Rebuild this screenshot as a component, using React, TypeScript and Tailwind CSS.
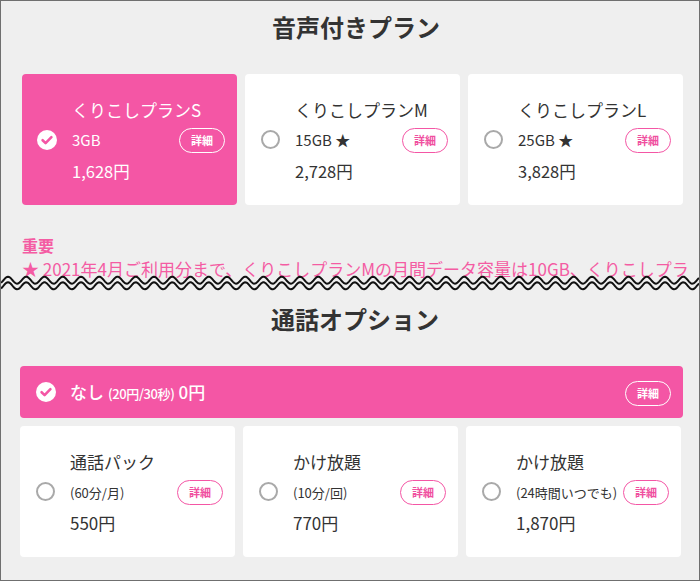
import React from 'react';

const PINK = '#f456a5';

type Plan = {
  name: string;
  spec: string;
  price: string;
  selected?: boolean;
};

const voicePlans: Plan[] = [
  { name: 'くりこしプランS', spec: '3GB', price: '1,628円', selected: true },
  { name: 'くりこしプランM', spec: '15GB ★', price: '2,728円' },
  { name: 'くりこしプランL', spec: '25GB ★', price: '3,828円' },
];

const callOptions: Plan[] = [
  { name: '通話パック', spec: '(60分/月)', price: '550円' },
  { name: 'かけ放題', spec: '(10分/回)', price: '770円' },
  { name: 'かけ放題', spec: '(24時間いつでも)', price: '1,870円' },
];

// 波線（ページの切れ目）を描くためのパス
function wavePoints(center: number, amp: number, period: number, x0: number, width: number) {
  const pts: string[] = [];
  for (let x = 0; x <= width; x += 1) {
    const y = center - amp * Math.cos((2 * Math.PI * (x - x0)) / period);
    pts.push(`${x === 0 ? 'M' : 'L'}${x} ${y.toFixed(2)}`);
  }
  return pts.join(' ');
}

function CheckIcon() {
  return (
    <svg width="20" height="20" viewBox="0 0 20 20">
      <circle cx="10" cy="10" r="10" fill="#fff" />
      <path d="M5.6 10.2 L8.6 13.1 L14.4 7.2" fill="none" stroke={PINK} strokeWidth="2.6" strokeLinecap="round" strokeLinejoin="round" />
    </svg>
  );
}

function Radio() {
  return <span className="block w-[19px] h-[19px] rounded-full border-2 border-[#a9a9a9] bg-white" />;
}

function DetailButton({ inverted }: { inverted?: boolean }) {
  return (
    <button
      type="button"
      className={
        inverted
          ? 'w-[46px] h-[25px] rounded-full border border-white text-white text-[11px] font-semibold leading-none shrink-0'
          : 'w-[46px] h-[25px] rounded-full border border-[#f456a5] text-[#f0509f] text-[11px] font-semibold leading-none shrink-0'
      }
    >
      詳細
    </button>
  );
}

function PlanCard({ plan, small }: { plan: Plan; small?: boolean }) {
  const sel = plan.selected;
  return (
    <div
      className={
        sel
          ? 'flex items-center h-[131px] rounded-[4px] bg-[#f456a5] text-white'
          : 'flex items-center h-[131px] rounded-[4px] bg-white text-[#333]'
      }
    >
      <div className="pl-[15px] w-[35px] shrink-0 flex justify-center">{sel ? <CheckIcon /> : <Radio />}</div>
      <div className="ml-[15px] flex-1 pt-[2px]">
        <div className="text-[17px] leading-[30px]">{plan.name}</div>
        <div className="flex items-center justify-between pr-[12px] h-[31px]">
          <span className={small ? 'text-[13px]' : 'text-[15px]'}>{plan.spec}</span>
          <DetailButton inverted={sel} />
        </div>
        <div className={small ? 'text-[17px] leading-[30px]' : 'text-[16.5px] leading-[30px]'}>{plan.price}</div>
      </div>
    </div>
  );
}

export default function App() {
  const W = 698;
  return (
    <div
      className="w-[700px] h-[581px] border border-[#6f6f6f] bg-[#efefef] overflow-hidden text-[#333]"
      style={{ fontFamily: '"Noto Sans CJK JP", "Noto Sans", sans-serif' }}
    >
      {/* 音声付きプラン */}
      <section className="relative h-[290px] overflow-hidden">
        <h2 className="pt-[8px] pl-[12px] text-center text-[24px] font-bold leading-[36px]">音声付きプラン</h2>
        <div className="grid grid-cols-3 gap-[8px] ml-[21px] w-[661px] mt-[29px]">
          {voicePlans.map((p) => (
            <PlanCard key={p.name} plan={p} />
          ))}
        </div>
        <div className="ml-[21px] w-[676px] mt-[28px] text-[#f45ca3]">
          <div className="text-[16px] font-bold leading-[24px]">重要</div>
          <p className="-mt-[1px] h-[26px] overflow-hidden text-[17px] leading-[26px]">
            ★ 2021年4月ご利用分まで、くりこしプランMの月間データ容量は10GB、くりこしプランLの月間データ容量は20GBです。
          </p>
        </div>
        {/* 切れ目の波線 */}
        <svg className="absolute left-0 bottom-0" width={W} height="20" viewBox={`0 0 ${W} 20`}>
          <path d={`${wavePoints(9.2, 3.5, 18.25, 7, W)} L${W} 20 L0 20 Z`} fill="#efefef" />
          <path d={wavePoints(9.2, 3.5, 18.25, 7, W)} fill="none" stroke="#111" strokeWidth="2" />
          <path d={wavePoints(14.8, 3.5, 18.25, 7, W)} fill="none" stroke="#111" strokeWidth="2" />
        </svg>
      </section>

      {/* 通話オプション */}
      <section>
        <h2 className="pt-[10px] pl-[10px] text-center text-[24px] font-bold leading-[36px]">通話オプション</h2>
        <div className="mt-[29px] ml-[19px] w-[663px] h-[52px] rounded-[4px] bg-[#f456a5] text-white flex items-center">
          <div className="pl-[16px] w-[36px] shrink-0 flex justify-center">
            <CheckIcon />
          </div>
          <div className="ml-[14px] flex-1 flex items-baseline font-medium">
            <span className="text-[17px]">なし</span>
            <span className="text-[13px] ml-[4px] tracking-[-0.03em]">(20円/30秒)</span>
            <span className="text-[17px] ml-[4px]">0円</span>
          </div>
          <div className="mr-[12px]">
            <DetailButton inverted />
          </div>
        </div>
        <div className="grid grid-cols-3 gap-[8px] ml-[19px] w-[661px] mt-[8px]">
          {callOptions.map((p) => (
            <PlanCard key={p.spec} plan={p} small />
          ))}
        </div>
      </section>
    </div>
  );
}
